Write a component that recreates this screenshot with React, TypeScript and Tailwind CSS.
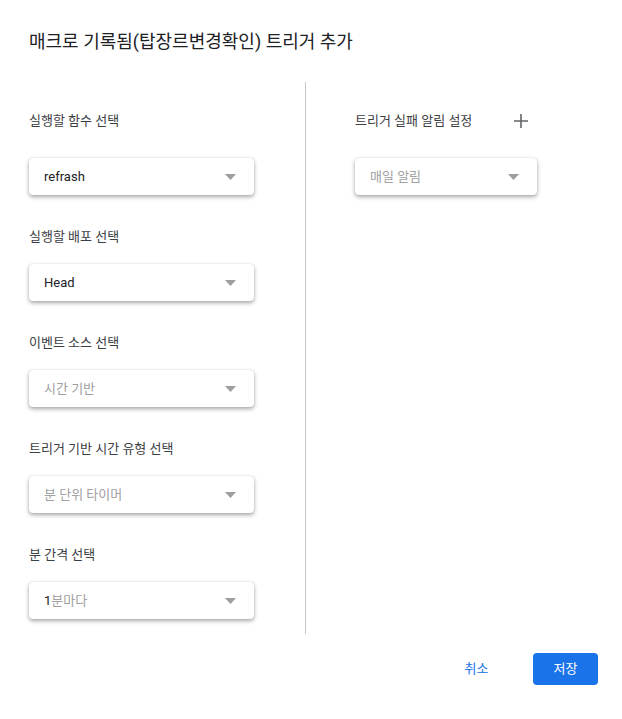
import React from "react";

type Field = { label: string; value: string; placeholder?: boolean; prefix?: string };

const fields: Field[] = [
  { label: "실행할 함수 선택", value: "refrash" },
  { label: "실행할 배포 선택", value: "Head" },
  { label: "이벤트 소스 선택", value: "시간 기반", placeholder: true },
  { label: "트리거 기반 시간 유형 선택", value: "분 단위 타이머", placeholder: true },
  { label: "분 간격 선택", value: "분마다", placeholder: true, prefix: "1" },
];

function Caret() {
  return (
    <svg width="11" height="6" viewBox="0 0 11 6" className="shrink-0">
      <path d="M0 0h11L5.5 6z" fill="#9e9e9e" />
    </svg>
  );
}

function Select({ field, width }: { field: Field; width: string }) {
  return (
    <div
      className={`${width} h-[37px] flex items-center justify-between pl-[15px] pr-[18px] bg-white rounded-[4px] shadow-[0_2px_4px_rgba(0,0,0,0.35),0_0_1px_rgba(0,0,0,0.2)]`}
    >
      <span className={`text-[13px] ${field.placeholder ? "text-[#a0a0a0]" : "text-[#202124]"}`}>
        {field.prefix && <span className="text-[#202124]">{field.prefix}</span>}
        {field.value}
      </span>
      <Caret />
    </div>
  );
}

export default function App() {
  return (
    <div
      className="w-[622px] h-[719px] bg-white text-[#202124]"
      style={{ fontFamily: "Roboto, 'Noto Sans CJK KR', sans-serif" }}
    >
      <h1 className="pt-[31px] pl-[29px] text-[18px] leading-[22px] font-normal">
        매크로 기록됨(탑장르변경확인) 트리거 추가
      </h1>

      <div className="flex mt-[29px]">
        {/* left column */}
        <div className="w-[306px] pl-[29px] pt-[29px] pb-[15px] border-r border-[#c8c8c8] flex flex-col gap-[32px]">
          {fields.map((f, i) => (
            <div key={f.label} className={`flex flex-col ${i === 0 ? "gap-[27px]" : "gap-[17px]"}`}>
              <div className="text-[13px] leading-[20px] text-[#3c4043]">{f.label}</div>
              <Select field={f} width="w-[225px]" />
            </div>
          ))}
        </div>

        {/* right column */}
        <div className="pl-[49px] pt-[29px] flex flex-col gap-[27px]">
          <div className="flex items-center h-[20px]">
            <span className="text-[13px] leading-[20px] text-[#3c4043]">트리거 실패 알림 설정</span>
            <svg width="14" height="14" viewBox="0 0 14 14" className="ml-[42px]">
              <path d="M7 0v14M0 7h14" stroke="#5f6368" strokeWidth="1.6" />
            </svg>
          </div>
          <Select field={{ label: "", value: "매일 알림", placeholder: true }} width="w-[182px]" />
        </div>
      </div>

      {/* footer */}
      <div className="flex justify-end items-center gap-[24px] pt-[19px] pr-[24px]">
        <button className="w-[65px] h-[32px] text-[13px] text-[#1a73e8] rounded-[4px]">취소</button>
        <button className="w-[65px] h-[32px] text-[13px] text-white bg-[#1a73e8] rounded-[4px]">저장</button>
      </div>
    </div>
  );
}
